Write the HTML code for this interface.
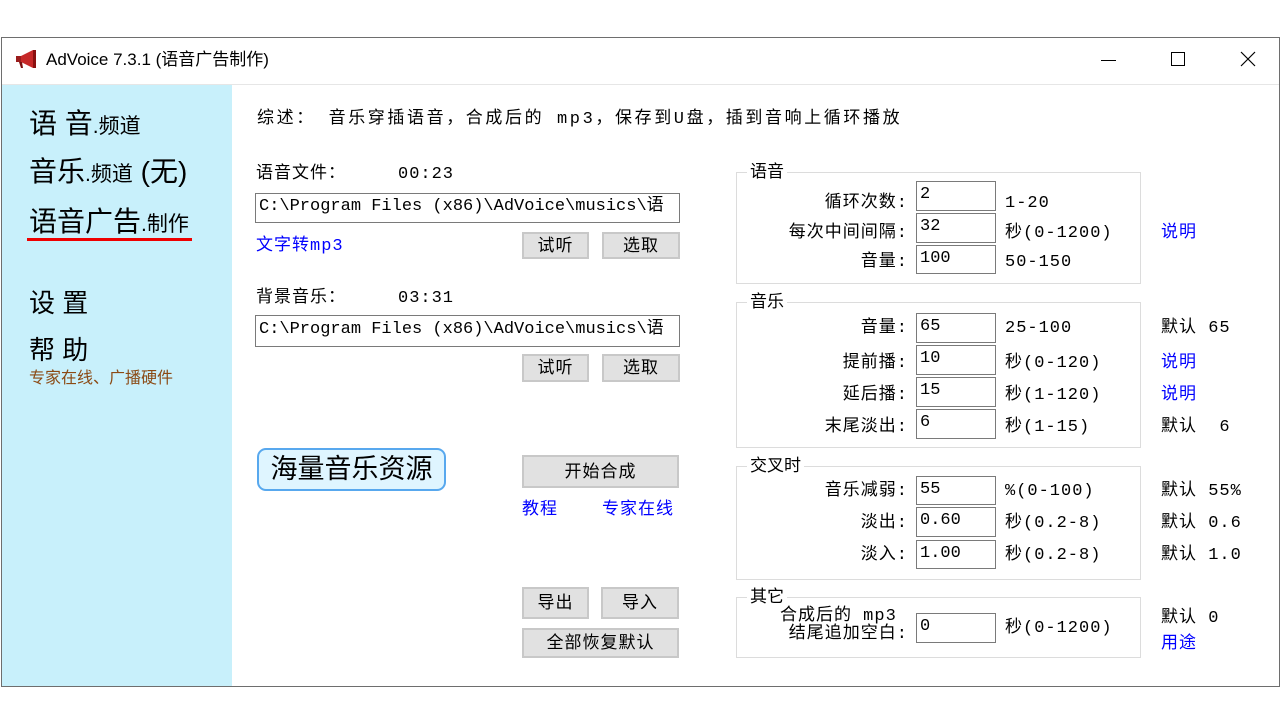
<!DOCTYPE html>
<html><head><meta charset="utf-8"><style>
*{margin:0;padding:0;box-sizing:border-box}
body{width:1280px;height:720px;background:#fff;position:relative;overflow:hidden;font-family:"Liberation Sans","Noto Sans CJK SC",sans-serif;color:#000}
.a{position:absolute;white-space:nowrap}
.t{font-size:17px;line-height:20px;letter-spacing:1px;font-family:"Liberation Mono","Noto Sans CJK SC",monospace;margin-top:2px}
.in{position:absolute;border:1px solid #7a7a7a;background:#fff;font-size:17px;padding-left:3px;line-height:26px;font-family:"Liberation Mono","Noto Sans CJK SC",monospace;white-space:nowrap}
.btn{position:absolute;background:#e1e1e1;border:2px solid #c8c8c8;font-size:17px;text-align:center;letter-spacing:1px}
.grp{position:absolute;border:1px solid #dcdcdc}
.gt{position:absolute;background:#fff;font-size:17px;line-height:20px;padding:0 3px}
.lab{position:absolute;font-size:17px;line-height:20px;text-align:right;width:200px;letter-spacing:1px;font-family:"Liberation Mono","Noto Sans CJK SC",monospace;white-space:nowrap;margin-top:2px}
.blue{color:#0000ff}
</style></head><body>
<div class="a" style="left:1px;top:37px;width:1279px;height:650px;border:1px solid #6e6e6e"></div>
<div class="a" style="left:2px;top:84px;width:1277px;height:1px;background:#e6e6e6"></div>
<svg class="a" style="left:15px;top:49px" width="24" height="20" viewBox="0 0 24 20"><path d="M1 7h5v6H1z" fill="#9a1c1c"/><path d="M6 7l12-6v18L6 13z" fill="#c62828"/><path d="M18 1h3v18h-3z" fill="#8a1010"/><path d="M4 13l2 6h2l-1-6z" fill="#7a1010"/></svg>
<div class="a" style="left:46px;top:50px;font-size:17px;line-height:20px">AdVoice 7.3.1 (语音广告制作)</div>
<div class="a" style="left:1101px;top:60px;width:15px;height:1px;background:#000"></div>
<div class="a" style="left:1171px;top:52px;width:14px;height:14px;border:1px solid #000"></div>
<svg class="a" style="left:1240px;top:51px" width="16" height="16"><path d="M1 1L15 15M15 1L1 15" stroke="#000" stroke-width="1.2"/></svg>
<div class="a" style="left:2px;top:85px;width:230px;height:601px;background:#c8f0fb"></div>
<div class="a" style="left:29px;top:106px;font-size:28px;line-height:36px">语 音<span style="font-size:21px">.频道</span></div>
<div class="a" style="left:29px;top:154px;font-size:28px;line-height:36px">音乐<span style="font-size:21px">.频道</span> (无)</div>
<div class="a" style="left:29px;top:204px;font-size:28px;line-height:36px">语音广告<span style="font-size:21px">.制作</span></div>
<div class="a" style="left:27px;top:238px;width:165px;height:3px;background:#e00"></div>
<div class="a" style="left:29px;top:285px;font-size:26px;line-height:36px">设 置</div>
<div class="a" style="left:29px;top:332px;font-size:26px;line-height:36px">帮 助</div>
<div class="a" style="left:29px;top:369px;font-size:16px;line-height:20px;color:#8b4a14">专家在线、广播硬件</div>

<div class="a t" style="left:257px;top:108px;letter-spacing:2.6px">综述：&nbsp;音乐穿插语音，合成后的 mp3，保存到U盘，插到音响上循环播放</div>
<div class="a t" style="left:256px;top:163px">语音文件：</div><div class="a t" style="left:398px;top:163px">00:23</div>
<div class="in" style="left:255px;top:193px;width:425px;height:30px;overflow:hidden">C:\Program Files (x86)\AdVoice\musics\语</div>
<div class="a t blue" style="left:256px;top:235px">文字转mp3</div>
<div class="btn" style="left:522px;top:232px;width:67px;height:27px;line-height:23px">试听</div>
<div class="btn" style="left:602px;top:232px;width:78px;height:27px;line-height:23px">选取</div>
<div class="a t" style="left:256px;top:287px">背景音乐：</div><div class="a t" style="left:398px;top:287px">03:31</div>
<div class="in" style="left:255px;top:315px;width:425px;height:32px;line-height:28px;overflow:hidden">C:\Program Files (x86)\AdVoice\musics\语</div>
<div class="btn" style="left:522px;top:354px;width:67px;height:28px;line-height:24px">试听</div>
<div class="btn" style="left:602px;top:354px;width:78px;height:28px;line-height:24px">选取</div>
<div class="a" style="left:257px;top:448px;width:189px;height:43px;border:2px solid #58a8ee;border-radius:9px;background:#dff5ff;font-size:27px;line-height:38px;text-align:center">海量音乐资源</div>
<div class="btn" style="left:522px;top:455px;width:157px;height:33px;line-height:29px">开始合成</div>
<div class="a t blue" style="left:522px;top:499px">教程</div>
<div class="a t blue" style="left:602px;top:499px">专家在线</div>
<div class="btn" style="left:522px;top:587px;width:67px;height:32px;line-height:28px">导出</div>
<div class="btn" style="left:601px;top:587px;width:78px;height:32px;line-height:28px">导入</div>
<div class="btn" style="left:522px;top:628px;width:157px;height:30px;line-height:26px">全部恢复默认</div>

<div class="grp" style="left:736px;top:172px;width:405px;height:112px"></div><div class="gt" style="left:747px;top:162px">语音</div>
<div class="grp" style="left:736px;top:302px;width:405px;height:146px"></div><div class="gt" style="left:747px;top:292px">音乐</div>
<div class="grp" style="left:736px;top:466px;width:405px;height:114px"></div><div class="gt" style="left:747px;top:456px">交叉时</div>
<div class="grp" style="left:736px;top:597px;width:405px;height:61px"></div><div class="gt" style="left:747px;top:587px">其它</div>

<div class="lab" style="left:708px;top:192px">循环次数:</div><div class="in" style="left:916px;top:181px;width:80px;height:30px">2</div><div class="a t" style="left:1005px;top:192px">1-20</div>
<div class="lab" style="left:708px;top:222px">每次中间间隔:</div><div class="in" style="left:916px;top:213px;width:80px;height:30px">32</div><div class="a t" style="left:1005px;top:222px">秒(0-1200)</div><div class="a t blue" style="left:1161px;top:222px">说明</div>
<div class="lab" style="left:708px;top:251px">音量:</div><div class="in" style="left:916px;top:245px;width:80px;height:29px">100</div><div class="a t" style="left:1005px;top:251px">50-150</div>

<div class="lab" style="left:708px;top:317px">音量:</div><div class="in" style="left:916px;top:313px;width:80px;height:30px">65</div><div class="a t" style="left:1005px;top:317px">25-100</div><div class="a t" style="left:1161px;top:317px">默认 65</div>
<div class="lab" style="left:708px;top:352px">提前播:</div><div class="in" style="left:916px;top:345px;width:80px;height:30px">10</div><div class="a t" style="left:1005px;top:352px">秒(0-120)</div><div class="a t blue" style="left:1161px;top:352px">说明</div>
<div class="lab" style="left:708px;top:384px">延后播:</div><div class="in" style="left:916px;top:377px;width:80px;height:30px">15</div><div class="a t" style="left:1005px;top:384px">秒(1-120)</div><div class="a t blue" style="left:1161px;top:384px">说明</div>
<div class="lab" style="left:708px;top:416px">末尾淡出:</div><div class="in" style="left:916px;top:409px;width:80px;height:30px">6</div><div class="a t" style="left:1005px;top:416px">秒(1-15)</div><div class="a t" style="left:1161px;top:416px">默认&nbsp;&nbsp;6</div>

<div class="lab" style="left:708px;top:480px">音乐减弱:</div><div class="in" style="left:916px;top:476px;width:80px;height:29px">55</div><div class="a t" style="left:1005px;top:480px">%(0-100)</div><div class="a t" style="left:1161px;top:480px">默认 55%</div>
<div class="lab" style="left:708px;top:512px">淡出:</div><div class="in" style="left:916px;top:507px;width:80px;height:30px">0.60</div><div class="a t" style="left:1005px;top:512px">秒(0.2-8)</div><div class="a t" style="left:1161px;top:512px">默认 0.6</div>
<div class="lab" style="left:708px;top:544px">淡入:</div><div class="in" style="left:916px;top:540px;width:80px;height:29px">1.00</div><div class="a t" style="left:1005px;top:544px">秒(0.2-8)</div><div class="a t" style="left:1161px;top:544px">默认 1.0</div>

<div class="lab" style="left:708px;top:606px;line-height:18px">合成后的 mp3&nbsp;<br>结尾追加空白:</div><div class="in" style="left:916px;top:613px;width:80px;height:30px">0</div><div class="a t" style="left:1005px;top:617px">秒(0-1200)</div><div class="a t" style="left:1161px;top:607px">默认 0</div><div class="a t blue" style="left:1161px;top:633px">用途</div>
</body></html>
